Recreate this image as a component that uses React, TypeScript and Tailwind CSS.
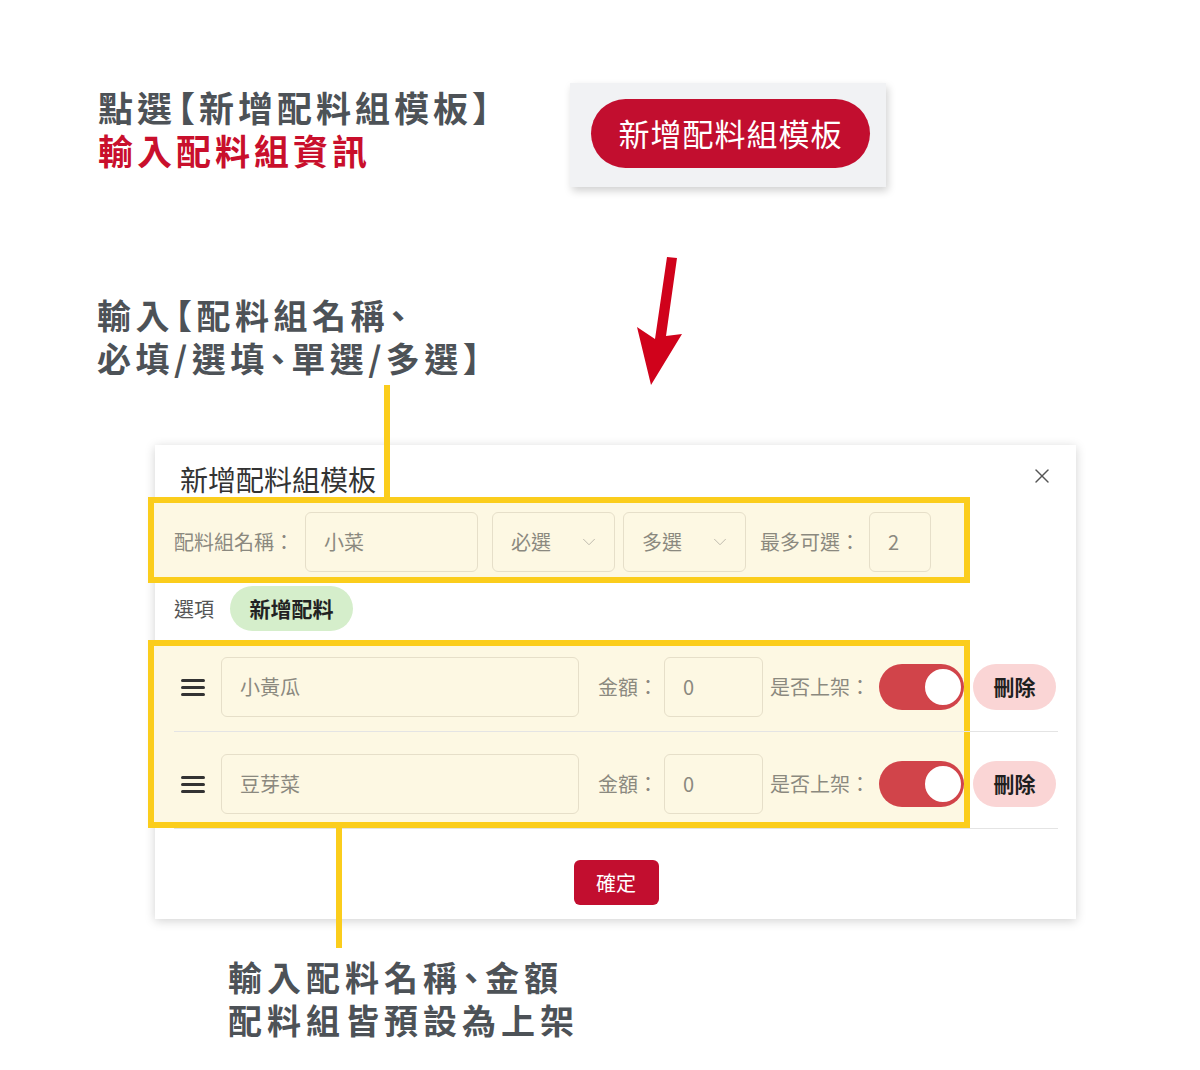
import React from "react";
import { X, ChevronDown } from "lucide-react";

const fieldBox =
  "h-[60px] rounded-[6px] border border-[#e6dfc9] bg-[#fdf8e3] flex items-center pl-[18px] text-[20px] text-[#8b897f]";

// half-width CJK punctuation, as in the reference artwork
const Open = ({ c }: { c: string }) => <span className="-ml-[16px]">{c}</span>;
const Close = ({ c }: { c: string }) => <span className="-mr-[16px]">{c}</span>;
const Comma = () => <span className="-mx-[8px]">、</span>;

const Select = ({ value }: { value: string }) => (
  <div className={`${fieldBox} w-[123px] justify-between pr-[14px]`}>
    <span>{value}</span>
    <ChevronDown size={22} strokeWidth={1} className="text-[#b9b5a8]" />
  </div>
);

const Toggle = () => (
  <div className="w-[85px] h-[46px] rounded-full bg-[#d1444a] flex items-center justify-end pr-[1px]">
    <div className="w-[40px] h-[40px] rounded-full bg-white border-[2px] border-[#d1444a]" />
  </div>
);

const ItemRow = ({ name }: { name: string }) => (
  <div className="flex items-center pt-[22px] pb-[14px] border-b border-[#e4e4e4]">
    <div className="ml-[7px] w-[24px] flex flex-col gap-[4px]">
      <div className="h-[3px] bg-[#333] rounded-sm" />
      <div className="h-[3px] bg-[#333] rounded-sm" />
      <div className="h-[3px] bg-[#333] rounded-sm" />
    </div>
    <div className={`${fieldBox} ml-[16px] w-[358px]`}>{name}</div>
    <span className="ml-[19px] text-[20px] text-[#8b897f] w-[66px]">金額：</span>
    <div className={`${fieldBox} w-[99px]`}>0</div>
    <span className="ml-[7px] text-[20px] text-[#8b897f] w-[109px]">是否上架：</span>
    <Toggle />
    <button className="ml-[9px] w-[83px] h-[46px] rounded-full bg-[#fad5d5] text-[21px] font-bold text-[#1f1f1f]">
      刪除
    </button>
  </div>
);

export default function App() {
  return (
    <div className="relative w-[1200px] h-[1070px] bg-white overflow-hidden font-['Noto_Sans_CJK_TC','Noto_Sans',sans-serif]">
      {/* top annotation + button preview */}
      <div className="flex pt-[83px] pl-[98px]">
        <div className="w-[472px] mt-[2px] text-[35px] leading-[43px] font-bold tracking-[4px]">
          <p className="text-[#4d5257] whitespace-nowrap">
            點選<Open c="【" />新增配料組模板<Close c="】" />
          </p>
          <p className="text-[#c90f2c]">輸入配料組資訊</p>
        </div>
        <div className="w-[316px] h-[104px] bg-[#f1f2f4] shadow-[2px_4px_8px_rgba(0,0,0,0.18)] pl-[21px] pt-[16px]">
          <div className="w-[279px] h-[69px] rounded-full bg-[#c20e2f] flex items-center justify-center text-white text-[31px] tracking-[1px]">
            新增配料組模板
          </div>
        </div>
      </div>

      <div className="mt-[106px] pl-[97px] text-[34px] leading-[43px] font-bold text-[#4d5257] tracking-[4.5px]">
        <p className="whitespace-nowrap">
          輸入<Open c="【" />配料組名稱<Comma />
        </p>
        <p className="whitespace-nowrap">
          必填/選填<Comma />單選/多選<Close c="】" />
        </p>
      </div>

      {/* modal */}
      <div className="mt-[66px] ml-[155px] w-[921px] bg-white shadow-[0_2px_10px_rgba(0,0,0,0.18)] pl-[19px] pr-[18px] pb-[14px]">
        <div className="relative h-[52px] pt-[16px]">
          <h2 className="pl-[6px] text-[28px] leading-[36px] text-[#333]">新增配料組模板</h2>
          <X
            size={24}
            strokeWidth={1.4}
            className="absolute right-[4px] top-[19px] text-[#555]"
          />
        </div>

        <div className="-ml-[26px] w-[822px] border-[6px] border-[#fbcd1c] bg-[#fdf8e3] pl-[20px] pt-[9px] pb-[5px] flex items-center">
          <span className="text-[20px] text-[#8b897f] w-[131px]">配料組名稱：</span>
          <div className={`${fieldBox} w-[173px]`}>小菜</div>
          <div className="ml-[14px]">
            <Select value="必選" />
          </div>
          <div className="ml-[8px]">
            <Select value="多選" />
          </div>
          <span className="ml-[14px] text-[20px] text-[#8b897f] w-[109px]">最多可選：</span>
          <div className={`${fieldBox} w-[62px]`}>2</div>
        </div>

        <div className="mt-[3px] flex items-center">
          <span className="text-[20px] text-[#555] w-[56px]">選項</span>
          <div className="w-[123px] h-[45px] rounded-full bg-[#d5eecb] flex items-center justify-center text-[21px] font-bold text-[#222]">
            新增配料
          </div>
        </div>

        <div className="relative mt-[4px]">
          <div className="absolute -left-[26px] top-[5px] w-[822px] h-[188px] border-[6px] border-[#fbcd1c] bg-[#fdf8e3]" />
          <div className="relative">
            <ItemRow name="小黃瓜" />
            <ItemRow name="豆芽菜" />
          </div>
        </div>

        <div className="mt-[31px] flex justify-center">
          <button className="w-[85px] h-[45px] rounded-[6px] bg-[#c20e2f] text-white text-[20px]">
            確定
          </button>
        </div>
      </div>

      <div className="mt-[36px] pl-[228px] text-[34px] leading-[43px] font-bold text-[#4d5257] tracking-[5px]">
        <p>
          輸入配料名稱<Comma />金額
        </p>
        <p>配料組皆預設為上架</p>
      </div>

      {/* annotation connectors and arrow */}
      <div className="absolute left-[384px] top-[385px] w-[6px] h-[112px] bg-[#fbcd1c]" />
      <div className="absolute left-[336px] top-[828px] w-[6px] h-[120px] bg-[#fbcd1c]" />
      <svg
        className="absolute left-[630px] top-[250px]"
        width="60"
        height="140"
        viewBox="630 250 60 140"
      >
        <polygon
          points="667,257 677,258 666,336 682,334 651,385 637,327 655,339"
          fill="#d0021b"
        />
      </svg>
    </div>
  );
}
